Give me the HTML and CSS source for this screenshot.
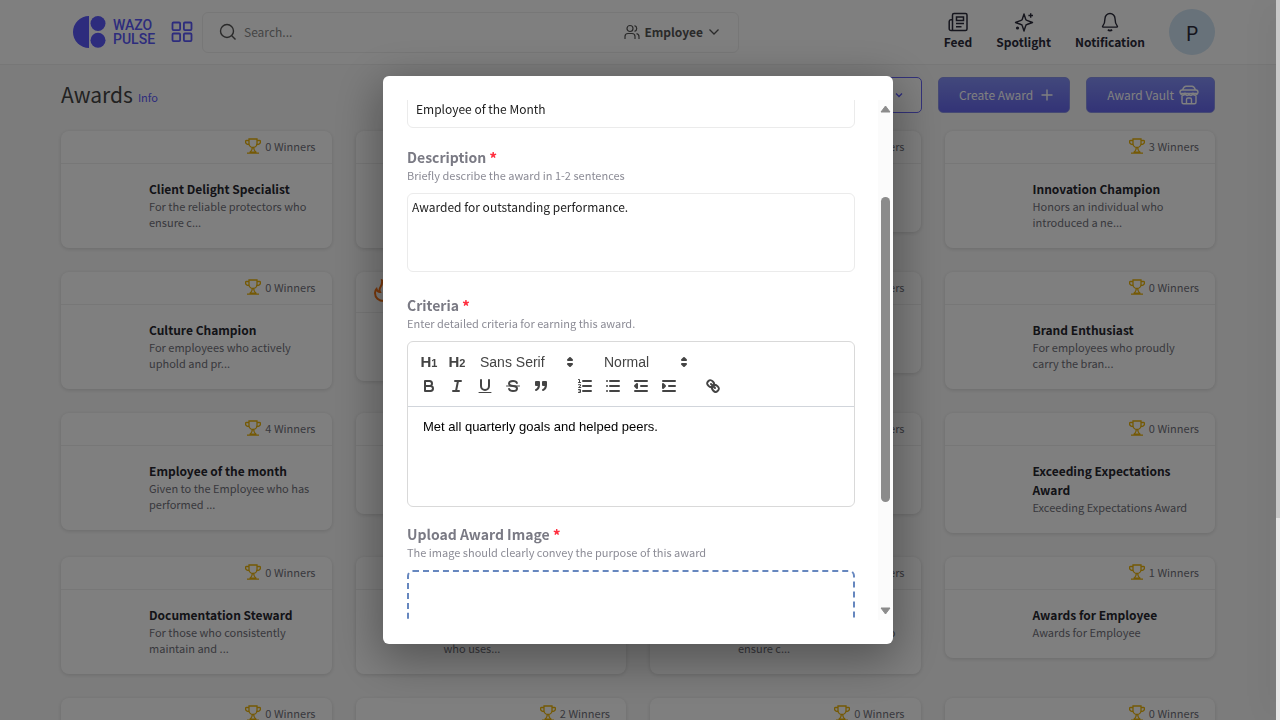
FILE: index.html
```html
<!DOCTYPE html>
<html lang="en">
<head>
<meta charset="utf-8">
<title>Awards</title>
<link rel="stylesheet" href="styles.css">
</head>
<body>
<svg class="sprite" aria-hidden="true">
  <symbol id="trophy" viewBox="0 0 16 16"><path d="M4 1h8v4.500a4 4 0 0 1-8 0zM4 2.500H1.500c-.8 0-1 .5-1 1C.5 5.500 2 6.500 4.200 6.600M12 2.500h2.500c.8 0 1 .5 1 1 0 2-1.500 3-3.700 3.100M7.300 9.500c0 2-.6 3.300-2.100 4.500M8.700 9.500c0 2 .6 3.300 2.100 4.500M2 15.200h12M4.500 14.200h7" fill="none" stroke="currentColor" stroke-width="1.300"/></symbol>
</svg>
<div class="page">
  <header class="topbar">
    <a class="logo" href="#">
      <svg width="34" height="34" viewBox="0 0 34 34"><path d="M17 1v32A16 16 0 0 1 17 1z"/><circle cx="26" cy="8.500" r="7.500"/><circle cx="26" cy="25.300" r="7.500"/></svg>
      <span>WAZO<br>PULSE</span>
    </a>
    <button class="apps" aria-label="Apps"><svg width="22" height="22" viewBox="0 0 22 22"><g fill="none" stroke="currentColor" stroke-width="1.800"><rect x="1.500" y="1.500" width="7.600" height="7.600" rx="1"/><rect x="12.900" y="1.500" width="7.600" height="7.600" rx="1"/><rect x="1.500" y="12.500" width="7.600" height="7.600" rx="1"/><rect x="12.900" y="12.500" width="7.600" height="7.600" rx="1"/></g></svg></button>
    <div class="search">
      <svg width="18" height="18" viewBox="0 0 18 18"><g fill="none" stroke="currentColor" stroke-width="1.400"><circle cx="8" cy="8" r="6.500"/><path d="M12.800 12.800l3.700 3.700"/></g></svg>
      <input type="search" placeholder="Search..." aria-label="Search">
      <button class="scope">
        <svg width="16" height="16" viewBox="0 0 16 16"><g fill="none" stroke="currentColor" stroke-width="1.200"><circle cx="6" cy="4.500" r="3"/><path d="M1 15v-2.500a3 3 0 0 1 3-3h4a3 3 0 0 1 3 3V15M10.500 1.600a3 3 0 0 1 0 5.800M12.500 9.700c1.600.4 2.500 1.500 2.500 3V15"/></g></svg>
        Employee
        <svg width="10" height="10" viewBox="0 0 10 10"><path d="M.5 2.500L5 7l4.500-4.500" fill="none" stroke="currentColor" stroke-width="1.300"/></svg>
      </button>
    </div>
    <nav class="nav">
      <a href="#"><svg width="20" height="20" viewBox="0 0 20 20"><g fill="none" stroke="currentColor" stroke-width="1.500"><path d="M4.500 18.500V3a1.500 1.500 0 0 1 1.500-1.500h11.500A1.500 1.500 0 0 1 19 3v14a1.500 1.500 0 0 1-1.500 1.500H3A1.800 1.800 0 0 1 1.200 16.700V9.500c0-1 .6-1.800 1.600-1.800h1.700"/><path d="M8.500 5h7v3.500h-7zM8 11.500h8M8 14.800h5.500"/></g></svg>Feed</a>
      <a href="#"><svg width="20" height="20" viewBox="0 0 20 20"><g fill="none" stroke="currentColor" stroke-width="1.400" stroke-linejoin="round"><path d="M10 2l1.700 5.200c.2.700.5 1 1.200 1.200L18.500 10.500l-5.600 2c-.7.200-1 .5-1.200 1.200L10 19l-1.700-5.300c-.2-.7-.5-1-1.200-1.200l-5.600-2 5.600-2.100c.7-.2 1-.5 1.200-1.200z"/><path d="M16.700 1.200v4.600M14.400 3.500H19"/></g><circle cx="3.500" cy="16" r="1.600" fill="currentColor"/></svg>Spotlight</a>
      <a href="#"><svg width="20" height="20" viewBox="0 0 20 20"><g fill="none" stroke="currentColor" stroke-width="1.400" stroke-linejoin="round"><path d="M10 1.500a5 5 0 0 0-5 5c0 4-.7 5.600-2.300 7.600-.4.500-.2 1 .4 1h13.800c.6 0 .8-.5.4-1-1.600-2-2.300-3.600-2.300-7.600a5 5 0 0 0-5-5z"/><path d="M8 17.600c1 1.300 3 1.300 4 0" stroke-width="1.800"/></g></svg>Notification</a>
    </nav>
    <button class="avatar" aria-label="Profile">P</button>
  </header>
  <main class="main">
    <div class="heading">
      <h1>Awards</h1><a href="#">Info</a>
      <div class="actions">
        <button class="btn outline" aria-label="Filter"><svg width="8" height="8" viewBox="0 0 8 8"><path d="M1 2.500l3 3 3-3" fill="none" stroke="currentColor" stroke-width="1.300"/></svg></button>
        <button class="btn create">Create Award <svg width="12" height="12" viewBox="0 0 12 12"><path d="M6 .5v11M.5 6h11" stroke="currentColor" stroke-width="1.400"/></svg></button>
        <button class="btn vault">Award Vault <svg width="20" height="20" viewBox="0 0 20 20"><g fill="none" stroke="currentColor" stroke-width="1.400"><path d="M3.500 5c1-2.500 2-3.700 3.500-3.700h6c1.500 0 2.500 1.200 3.500 3.700M1 7.500c0-1.500.8-2.500 2-2.500h14c1.200 0 2 1 2 2.500 0 .6-.4 1-1 1H2c-.6 0-1-.4-1-1zM1.500 8.500c.3 2 3.800 2.500 4.500.3.700 2.200 3.500 2.200 4 0 .5 2.200 3.300 2.200 4 0 .7 2.200 4.200 1.700 4.500-.3M3 11v6.200c0 .8.600 1.500 1.500 1.500h11c.9 0 1.500-.7 1.500-1.500V11M7.500 18.500v-4c0-.8.500-1.500 1.500-1.500h2c1 0 1.500.7 1.500 1.500v4"/></g></svg></button>
      </div>
    </div>
    <section class="cards">
      <article class="card"><div class="wins"><svg><use href="#trophy"/></svg>0 Winners</div><div class="info"><h2>Client Delight Specialist</h2><p>For the reliable protectors who ensure c...</p></div></article>
      <article class="card"><div class="wins"><svg><use href="#trophy"/></svg>0 Winners</div><div class="info"><h2>Award</h2><p>For employees who actively uphold and ...</p></div></article>
      <article class="card"><div class="wins"><svg><use href="#trophy"/></svg>0 Winners</div><div class="info"><h2>Award</h2><p>Award</p></div></article>
      <article class="card"><div class="wins"><svg><use href="#trophy"/></svg>3 Winners</div><div class="info"><h2>Innovation Champion</h2><p>Honors an individual who introduced a ne...</p></div></article>

      <article class="card"><div class="wins"><svg><use href="#trophy"/></svg>0 Winners</div><div class="info"><h2>Culture Champion</h2><p>For employees who actively uphold and pr...</p></div></article>
      <article class="card"><div class="wins hot"><svg class="flame" viewBox="0 0 24 24"><path d="M12 22c5.500 0 9-3.500 9-8.500 0-3-1.500-5.500-3-7-.2 2-1 3-2.500 3.500C15.500 6 13.500 3 10 1.500c.5 3.500-.5 5-1.500 6.500S7 11 8 13c-2 0-3-1-3.500-3C3.500 11 3 12.500 3 14c0 4.500 3.500 8 9 8z" fill="none" stroke="currentColor" stroke-width="2"/></svg><svg><use href="#trophy"/></svg>0 Winners</div><div class="info"><h2>Award</h2><p>Award</p></div></article>
      <article class="card"><div class="wins"><svg><use href="#trophy"/></svg>0 Winners</div><div class="info"><h2>Award</h2><p>Award</p></div></article>
      <article class="card"><div class="wins"><svg><use href="#trophy"/></svg>0 Winners</div><div class="info"><h2>Brand Enthusiast</h2><p>For employees who proudly carry the bran...</p></div></article>

      <article class="card"><div class="wins"><svg><use href="#trophy"/></svg>4 Winners</div><div class="info"><h2>Employee of the month</h2><p>Given to the Employee who has performed ...</p></div></article>
      <article class="card"><div class="wins"><svg><use href="#trophy"/></svg>0 Winners</div><div class="info"><h2>Award</h2><p>Award</p></div></article>
      <article class="card"><div class="wins"><svg><use href="#trophy"/></svg>0 Winners</div><div class="info"><h2>Award</h2><p>Award</p></div></article>
      <article class="card"><div class="wins"><svg><use href="#trophy"/></svg>0 Winners</div><div class="info"><h2>Exceeding Expectations Award</h2><p>Exceeding Expectations Award</p></div></article>

      <article class="card"><div class="wins"><svg><use href="#trophy"/></svg>0 Winners</div><div class="info"><h2>Documentation Steward</h2><p>For those who consistently maintain and ...</p></div></article>
      <article class="card"><div class="wins"><svg><use href="#trophy"/></svg>0 Winners</div><div class="info"><h2>Award</h2><p>For the employee<br>who uses...</p></div></article>
      <article class="card"><div class="wins"><svg><use href="#trophy"/></svg>0 Winners</div><div class="info"><h2>Award</h2><p>For the reliable protectors who ensure c...</p></div></article>
      <article class="card"><div class="wins"><svg><use href="#trophy"/></svg>1 Winners</div><div class="info"><h2>Awards for Employee</h2><p>Awards for Employee</p></div></article>

      <article class="card"><div class="wins"><svg><use href="#trophy"/></svg>0 Winners</div></article>
      <article class="card"><div class="wins"><svg><use href="#trophy"/></svg>2 Winners</div></article>
      <article class="card"><div class="wins"><svg><use href="#trophy"/></svg>0 Winners</div></article>
      <article class="card"><div class="wins"><svg><use href="#trophy"/></svg>0 Winners</div></article>
    </section>
  </main>
</div>
<div class="overlay">
  <div class="modal" role="dialog" aria-label="Create award">
    <form class="form">
      <input class="box name" type="text" value="Employee of the Month" aria-label="Award name">
      <div class="field">
        <label for="desc">Description <b>*</b></label>
        <small>Briefly describe the award in 1-2 sentences</small>
        <textarea class="box desc" id="desc">Awarded for outstanding performance.</textarea>
      </div>
      <div class="field">
        <label for="criteria">Criteria <b>*</b></label>
        <small>Enter detailed criteria for earning this award.</small>
        <div class="editor">
          <div class="toolbar">
            <div class="tools">
              <div class="group">
                <button type="button" class="h">H<i>1</i></button><button type="button" class="h">H<i>2</i></button>
                <div class="pick font"><select aria-label="Font"><option>Sans Serif</option></select><svg viewBox="0 0 18 18"><path class="f" d="M7 11L9 13L11 11zM7 7L9 5L11 7z"/></svg></div>
              </div>
              <div class="group">
                <div class="pick size"><select aria-label="Size"><option>Normal</option></select><svg viewBox="0 0 18 18"><path class="f" d="M7 11L9 13L11 11zM7 7L9 5L11 7z"/></svg></div>
              </div>
            </div>
            <div class="tools">
              <div class="group">
                <button type="button" aria-label="Bold"><svg viewBox="0 0 18 18"><path d="M5 4H9.500A2.500 2.500 0 0 1 9.500 9H5zM5 9h5.500a2.500 2.500 0 0 1 0 5H5z"/></svg></button>
                <button type="button" aria-label="Italic"><svg viewBox="0 0 18 18"><path d="M7 4h6M5 14h6M8 14L10 4"/></svg></button>
                <button type="button" aria-label="Underline"><svg viewBox="0 0 18 18"><path d="M5 3V9a4 4 0 0 0 8 0V3"/><path class="thin" d="M3 15.500h12"/></svg></button>
                <button type="button" aria-label="Strikethrough"><svg viewBox="0 0 18 18"><path d="M12.900 6C12.500 4.800 10.900 4 9 4 6.700 4 5 5.100 5 6.500S6 8.800 9 9s4 1.100 4 2.500S11.300 14 9 14c-1.900 0-3.500-.8-3.900-2"/><path class="thin" d="M2.500 9h13"/></svg></button>
                <button type="button" aria-label="Quote"><svg viewBox="0 0 18 18"><path class="f" d="M4 5h3v3H4zM11 5h3v3h-3zM7 8c0 4-3 5-3 5M14 8c0 4-3 5-3 5"/></svg></button>
              </div>
              <div class="group">
                <button type="button" aria-label="Numbered list"><svg viewBox="0 0 18 18"><path d="M7 4h8M7 9h8M7 14h8"/><path class="thin" d="M2.500 2.500h1V5.500M2.500 5.500h2M2.500 7.700h2v1.300l-2 1.500h2.300M2.500 12.500h2v3h-2M3 14h1.500"/></svg></button>
                <button type="button" aria-label="Bullet list"><svg viewBox="0 0 18 18"><path d="M6 4h9M6 9h9M6 14h9M3 4h.01M3 9h.01M3 14h.01"/></svg></button>
                <button type="button" aria-label="Outdent"><svg viewBox="0 0 18 18"><path d="M3 14h12M3 4h12M9 9h6"/><path class="f" d="M5 7v4L3 9z"/></svg></button>
                <button type="button" aria-label="Indent"><svg viewBox="0 0 18 18"><path d="M3 14h12M3 4h12M9 9h6"/><path class="f" d="M3 7v4l2-2z"/></svg></button>
              </div>
              <div class="group">
                <button type="button" aria-label="Link"><svg viewBox="0 0 18 18"><path d="M7 7l4 4M8.900 4.577a3.476 3.476 0 0 1 .36 4.679A3.476 3.476 0 0 1 4.577 8.900C3.185 7.500 2.035 6.400 4.217 4.217S7.500 3.185 8.900 4.577ZM13.423 9.100a3.476 3.476 0 0 0-4.679-.36 3.476 3.476 0 0 0 .36 4.679c1.392 1.392 2.500 2.542 4.679.36S14.815 10.500 13.423 9.100Z"/></svg></button>
              </div>
            </div>
          </div>
          <textarea id="criteria">Met all quarterly goals and helped peers.</textarea>
        </div>
      </div>
      <div class="field">
        <label for="file">Upload Award Image <b>*</b></label>
        <small>The image should clearly convey the purpose of this award</small>
        <button type="button" class="drop" id="file" aria-label="Upload award image"></button>
      </div>
    </form>
    <div class="track" aria-hidden="true">
      <svg width="11" height="8" viewBox="0 0 11 8"><path d="M5.500 1L10 7H1z"/></svg>
      <div class="thumb"></div>
      <svg width="11" height="8" viewBox="0 0 11 8"><path d="M5.500 7L1 1h9z"/></svg>
    </div>
  </div>
</div>
<div class="edge" aria-hidden="true"></div>
</body>
</html>
```
FILE: styles.css
```css
* { box-sizing: border-box; }
html, body { height: 100%; }
body { margin: 0; overflow: hidden; font-family: "Noto Sans CJK JP", "Noto Sans", sans-serif; font-size: 12px; color: #222; }
button, input, textarea, select { font: inherit; color: inherit; margin: 0; padding: 0; border: 0; background: none; }
a { text-decoration: none; color: inherit; }
h1, h2, p { margin: 0; }
.sprite { display: none; }

.page { height: 100%; overflow: hidden; padding-right: 4px; background: #f9f9f9; }
.topbar { display: flex; align-items: center; height: 65px; padding: 0 61px 0 72px; background: #fff; border-bottom: 1px solid #eee; }
.logo { display: flex; align-items: center; gap: 7px; width: 82px; color: #5a58fa; font: 500 14px/14px Roboto, sans-serif; }
.logo svg { flex: none; fill: #5a58fa; }
.apps { display: flex; margin: 0 9px 0 17px; color: #5a58fa; }
.search { display: flex; align-items: center; width: 537px; height: 41px; padding: 0 19px 1px 16px; border: 1px solid #efefef; border-radius: 6px; color: #555; }
.search input { flex: 1; min-width: 0; margin-left: 7px; outline: none; }
.search input::placeholder { color: #8a8a8a; }
.scope { display: flex; align-items: center; gap: 4px; font-weight: bold; }
.scope svg:last-child { margin-left: 2px; }
.nav { display: flex; gap: 24px; margin-left: auto; color: #2b2b3a; font-weight: bold; }
.nav a { display: flex; flex-direction: column; align-items: center; line-height: 20px; }
.avatar { width: 46px; height: 46px; margin-left: 24px; border-radius: 50%; background: #d0e4f4; font-size: 20px; color: #2b2b3a; }

.main { padding: 12px 61px 0; }
.heading { display: flex; align-items: center; gap: 5px; margin-bottom: 18px; }
.heading h1 { font-size: 21px; line-height: 34px; padding-bottom: 2px; font-weight: 400; color: #444; }
.heading > a { font-size: 11px; color: #5a58fa; padding-top: 3px; }
.actions { display: flex; align-items: center; gap: 16px; margin-left: auto; }
.btn { display: flex; align-items: center; height: 36px; border-radius: 5px; padding: 0 16px 1px 20px; color: #fff; border: 1px solid #8a92e8; background: linear-gradient(#8490f8, #6667ee); }
.btn.create { gap: 8px; }
.btn.vault { gap: 5px; padding-right: 15px; }
.btn.outline { width: 136px; justify-content: flex-end; padding-right: 18px; background: #fff; color: #5a58fa; border-color: #6664f4; }

.cards { display: grid; grid-template-columns: repeat(4, 1fr); gap: 24px; align-items: start; }
.card { background: #fff; border-radius: 8px; box-shadow: 0 1px 4px rgba(0,0,0,.14); }
.wins { display: flex; align-items: center; justify-content: flex-end; gap: 4px; height: 33px; padding: 0 16px 3px; border-bottom: 1px solid #eee; font-size: 11px; color: #71717a; }
.wins svg { width: 16px; height: 16px; color: #eab308; }
.wins.hot { height: 41px; }
.wins .flame { width: 24px; height: 24px; margin-right: auto; color: #f97316; }
.info { padding: 15px 16px 18px 88px; }
.info h2 { font-size: 12px; line-height: 19px; font-weight: bold; color: #27272f; }
.info p { font-size: 11px; line-height: 16px; color: #71717a; }

.overlay { position: fixed; inset: 0; display: flex; align-items: center; justify-content: center; padding-right: 4px; background: rgba(0,0,0,.5); }
.modal { display: flex; width: 510px; height: 568px; padding: 24px 0; border-radius: 6px; background: #fff; box-shadow: 0 12px 46px 4px rgba(0,0,0,.35); }
.form { flex: 1; overflow: hidden; display: flex; flex-direction: column; gap: 16px; padding: 0 23px 0 24px; }
.box { width: 100%; border: 1px solid #ebebeb; border-radius: 6px; color: #222; outline: none; }
.name { flex: none; height: 41px; margin: -13px 0 2px; padding: 2px 8px 0; }
.field { flex: none; }
.field label { display: block; height: 22px; font-size: 14px; line-height: 22px; font-weight: bold; color: #7a7a84; }
.field label b { color: #ff3040; }
.field small { display: block; margin-bottom: 10px; font-size: 11px; line-height: 15px; color: #8b8b95; }
.desc { display: block; height: 79px; margin-bottom: 6px; padding: 2px 4px; line-height: 21px; resize: none; }
.editor { border: 1px solid #d9d9d9; border-radius: 6px; font-family: "Liberation Sans", sans-serif; }
.toolbar { padding: 8px 7px; border-bottom: 1px solid #d1d5db; color: #444; }
.tools, .group { display: flex; }
.tools { gap: 16px; }
.tools button { display: flex; align-items: center; justify-content: center; width: 28px; height: 24px; }
.tools svg { width: 18px; height: 18px; fill: none; stroke: #444; stroke-width: 2; stroke-linecap: round; stroke-linejoin: round; }
.tools svg .thin { stroke-width: 1; }
.tools svg .f { fill: #444; }
.tools .h { align-items: baseline; font-size: 15px; font-weight: bold; line-height: 24px; }
.h i { font-size: 11px; font-style: normal; }
.pick { display: flex; align-items: center; height: 24px; padding-left: 9px; }
.pick select { flex: 1; min-width: 0; appearance: none; font-size: 14px; line-height: 22px; }
.font { width: 108px; }
.size { width: 98px; }
.editor textarea { display: block; width: 100%; height: 99px; padding: 11px 15px; font-size: 13px; line-height: 18px; color: #000; resize: none; outline: none; }
.drop { display: block; width: 100%; height: 120px; border: 2px dashed #6687bf; border-radius: 6px; }
.track { width: 15px; display: flex; flex-direction: column; align-items: center; padding: 5px 0; background: #fbfbfb; }
.track svg { fill: #8b8b8b; stroke: #8b8b8b; stroke-linejoin: round; }
.thumb { width: 9px; height: 305px; margin: 84px 0 auto; border-radius: 5px; background: #8b8b8b; }
.edge { position: fixed; top: 0; right: 0; bottom: 0; width: 4px; background: linear-gradient(#c9c9c9 72%, #e6e6e6 72%); box-shadow: 0 0 36px rgba(0,0,0,.3); }
```
